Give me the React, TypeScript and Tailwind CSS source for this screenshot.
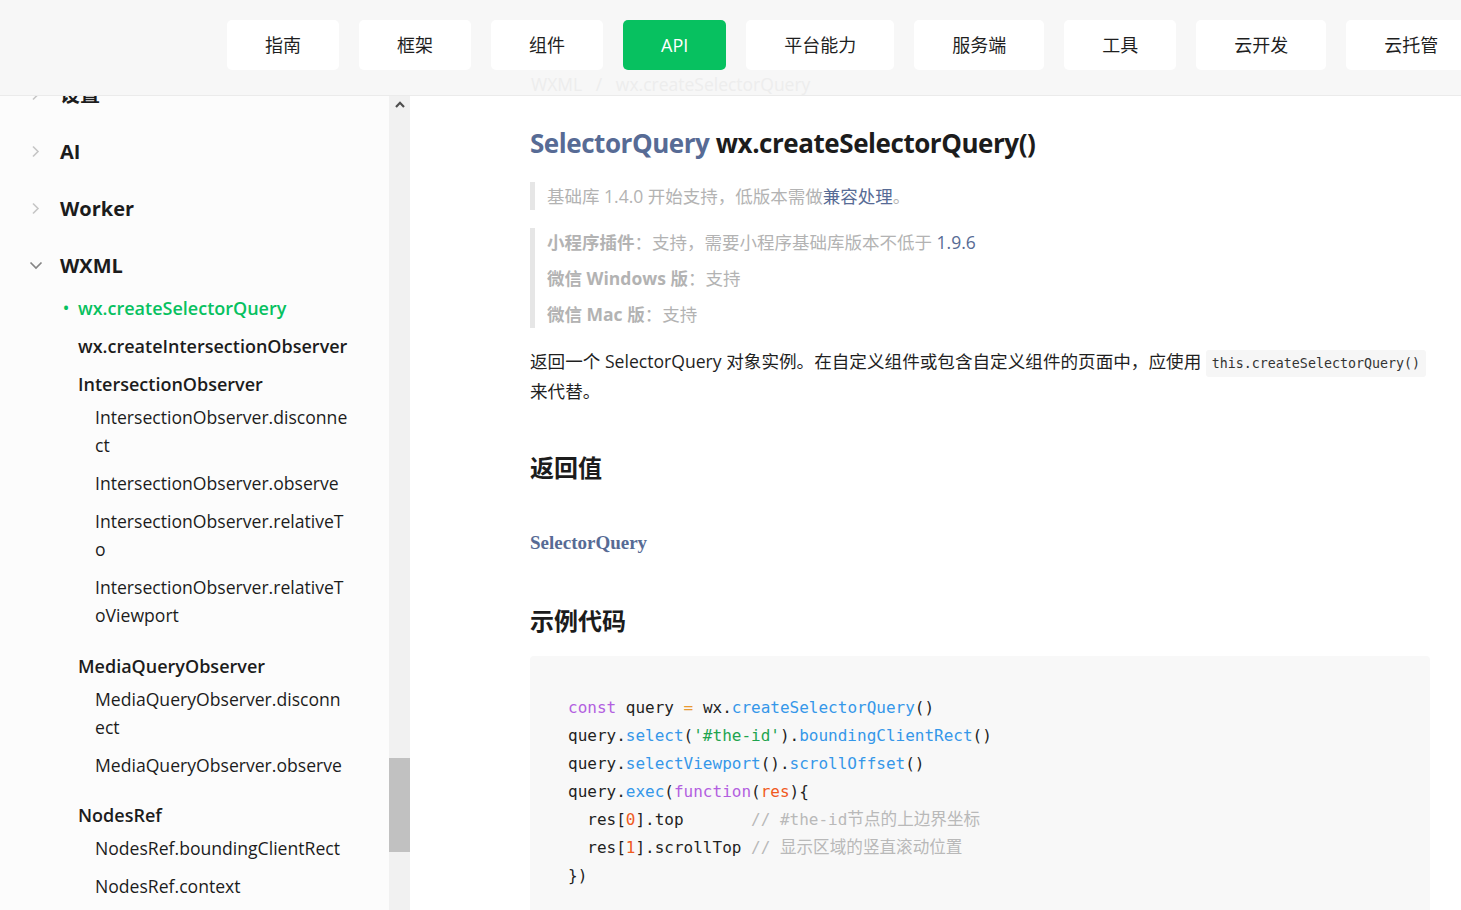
import React from "react";

const navItems = ["指南", "框架", "组件", "API", "平台能力", "服务端", "工具", "云开发", "云托管"];

function ChevronRight() {
  return (
    <svg width="9" height="13" viewBox="0 0 9 13" className="shrink-0">
      <path d="M2 1.5 L7 6.5 L2 11.5" stroke="#c6c6c6" strokeWidth="1.6" fill="none" />
    </svg>
  );
}

function ChevronDown() {
  return (
    <svg width="14" height="9" viewBox="0 0 14 9" className="shrink-0">
      <path d="M1.5 1.5 L7 7 L12.5 1.5" stroke="#858585" strokeWidth="1.7" fill="none" />
    </svg>
  );
}

function TopItem({ label, open }: { label: string; open?: boolean }) {
  return (
    <div className="h-[57px] flex items-center">
      <div className="w-[60px] flex items-center justify-start pl-[29px]">
        {open ? <ChevronDown /> : <div className="pl-[2px]"><ChevronRight /></div>}
      </div>
      <span className="text-[20px] font-bold text-[#1c1c1c]">{label}</span>
    </div>
  );
}

function Heading({ label }: { label: string }) {
  return (
    <div className="h-[38px] flex items-center pl-[78px] text-[18px] font-semibold text-[#1c1c1c]">{label}</div>
  );
}

function Sub({ lines }: { lines: string[] }) {
  return (
    <div className="pl-[95px] text-[17.6px] leading-[28px] text-[#1c1c1c]">
      {lines.map((l, i) => (
        <div key={i} className="h-[28px]">{l}</div>
      ))}
    </div>
  );
}

function Sidebar() {
  return (
    <aside className="w-[389px] shrink-0 bg-[#fcfcfc] overflow-hidden">
      <div className="-mt-[30px]">
        <TopItem label="设置" />
        <TopItem label="AI" />
        <TopItem label="Worker" />
        <TopItem label="WXML" open />
        <div className="-mt-[5px]">
          <div className="h-[38px] flex items-center pl-[63px] text-[18px] font-semibold text-[#07c160]">
            <span className="w-[15px] text-[16px]">•</span>
            <span>wx.createSelectorQuery</span>
          </div>
          <Heading label="wx.createIntersectionObserver" />
          <Heading label="IntersectionObserver" />
          <div className="flex flex-col gap-[10px] mb-[18px]">
            <Sub lines={["IntersectionObserver.disconne", "ct"]} />
            <Sub lines={["IntersectionObserver.observe"]} />
            <Sub lines={["IntersectionObserver.relativeT", "o"]} />
            <Sub lines={["IntersectionObserver.relativeT", "oViewport"]} />
          </div>
          <Heading label="MediaQueryObserver" />
          <div className="flex flex-col gap-[10px] mb-[17px]">
            <Sub lines={["MediaQueryObserver.disconn", "ect"]} />
            <Sub lines={["MediaQueryObserver.observe"]} />
          </div>
          <Heading label="NodesRef" />
          <div className="flex flex-col gap-[10px]">
            <Sub lines={["NodesRef.boundingClientRect"]} />
            <Sub lines={["NodesRef.context"]} />
          </div>
        </div>
      </div>
    </aside>
  );
}

function Scrollbar() {
  return (
    <div className="w-[21px] shrink-0 bg-[#f1f1f1] flex flex-col">
      <div className="h-[17px] flex items-center justify-center">
        <svg width="10" height="7" viewBox="0 0 10 7">
          <path d="M1 6 L5 1.8 L9 6" stroke="#4f4f4f" strokeWidth="2.2" fill="none" />
        </svg>
      </div>
      <div className="h-[645px]" />
      <div className="h-[94px] bg-[#c1c1c1]" />
    </div>
  );
}

const P = "text-[#b35fe0]";
const B = "text-[#3597e9]";
const G = "text-[#1fa44f]";
const O = "text-[#f05a1e]";
const C = "text-[#b9b9b9]";

function Code() {
  return (
    <div className="mt-[17px] bg-[#f8f8f8] rounded-[4px] pt-[38px] pb-[40px] px-[38px] font-['DejaVu_Sans_Mono','Noto_Sans_CJK_SC',monospace] text-[16px] leading-[28px] text-[#1f1f1f] whitespace-pre">
      <div className="h-[28px]">
        <span className={P}>const</span> query <span className="text-[#e99a32]">=</span> wx.<span className={B}>createSelectorQuery</span>()
      </div>
      <div className="h-[28px]">
        query.<span className={B}>select</span>(<span className={G}>'#the-id'</span>).<span className={B}>boundingClientRect</span>()
      </div>
      <div className="h-[28px]">
        query.<span className={B}>selectViewport</span>().<span className={B}>scrollOffset</span>()
      </div>
      <div className="h-[28px]">
        query.<span className={B}>exec</span>(<span className={P}>function</span>(<span className={O}>res</span>){"{"}
      </div>
      <div className="h-[28px]">
        {"  res["}<span className={O}>0</span>{"].top       "}<span className={C}>// #the-id<span className="text-[16.6px]">节点的上边界坐标</span></span>
      </div>
      <div className="h-[28px]">
        {"  res["}<span className={O}>1</span>{"].scrollTop "}<span className={C}>// <span className="text-[16.6px]">显示区域的竖直滚动位置</span></span>
      </div>
      <div className="h-[28px]">{"})"}</div>
    </div>
  );
}

function Main() {
  return (
    <main className="flex-1 bg-white overflow-hidden pl-[120px] pr-[31px]">
      <h1 className="mt-[27px] h-[40px] leading-[40px] text-[26px] font-bold tracking-[-0.45px] text-[#1c1c1c] whitespace-nowrap">
        <span className="text-[#576b95]">SelectorQuery</span> wx.createSelectorQuery()
      </h1>
      <div className="mt-[19px] border-l-[5px] border-[#e6e6e6] pl-[12px] h-[28px] leading-[28px] text-[17.5px] text-[#b3b3b3]">
        基础库 1.4.0 开始支持，低版本需做<span className="text-[#576b95]">兼容处理</span>。
      </div>
      <div className="mt-[18px] border-l-[5px] border-[#e6e6e6] pl-[12px] flex flex-col gap-[8px] text-[17.5px] text-[#b3b3b3]">
        <div className="h-[28px] leading-[28px]">
          <span className="font-bold">小程序插件</span>：支持，需要小程序基础库版本不低于 <span className="text-[#576b95]">1.9.6</span>
        </div>
        <div className="h-[28px] leading-[28px]">
          <span className="font-bold">微信 Windows 版</span>：支持
        </div>
        <div className="h-[28px] leading-[28px]">
          <span className="font-bold">微信 Mac 版</span>：支持
        </div>
      </div>
      <div className="mt-[18px] text-[17.6px] leading-[30px] text-[#1f1f1f]">
        <div className="h-[30px] whitespace-nowrap">
          返回一个 SelectorQuery 对象实例。在自定义组件或包含自定义组件的页面中，应使用{" "}
          <code className="bg-[#f6f6f6] rounded-[3px] px-[6px] py-[6px] leading-none font-['DejaVu_Sans_Mono',monospace] text-[13.3px] text-[#333]">
            this.createSelectorQuery()
          </code>
        </div>
        <div className="h-[30px]">来代替。</div>
      </div>
      <h2 className="mt-[44px] h-[36px] leading-[36px] text-[24px] font-bold text-[#1c1c1c]">返回值</h2>
      <div className="mt-[43px] h-[28px] leading-[28px] font-['Liberation_Serif',serif] font-bold text-[19px] text-[#576b95]">
        SelectorQuery
      </div>
      <h2 className="mt-[46px] h-[36px] leading-[36px] text-[24px] font-bold text-[#1c1c1c]">示例代码</h2>
      <Code />
    </main>
  );
}

export default function App() {
  return (
    <div className="w-[1461px] h-[910px] overflow-hidden flex flex-col font-['Open_Sans','Noto_Sans_CJK_SC',sans-serif] bg-white">
      <header className="relative h-[96px] shrink-0 bg-[#f7f7f7] border-b border-[#ebebeb] overflow-hidden">
        <nav className="flex gap-[20px] pl-[227px] pt-[20px] whitespace-nowrap">
          {navItems.map((n) => (
            <div
              key={n}
              className={
                n === "API"
                  ? "shrink-0 h-[50px] px-[38px] rounded-[5px] bg-[#07c160] text-white text-[18px] flex items-center justify-center"
                  : "shrink-0 h-[50px] px-[38px] rounded-[5px] bg-white text-[#1f1f1f] text-[18px] flex items-center justify-center"
              }
            >
              {n}
            </div>
          ))}
        </nav>
        <div className="absolute left-[531px] top-[71px] text-[17.5px] text-[#ededed] whitespace-nowrap">
          WXML&nbsp;&nbsp;&nbsp;/&nbsp;&nbsp;&nbsp;wx.createSelectorQuery
        </div>
      </header>
      <div className="flex flex-1 min-h-0">
        <Sidebar />
        <Scrollbar />
        <Main />
      </div>
    </div>
  );
}
